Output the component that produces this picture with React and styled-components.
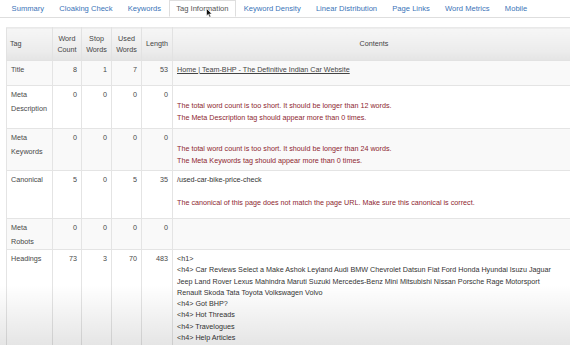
import React from 'react'
import styled, { createGlobalStyle } from 'styled-components'

const GlobalStyle = createGlobalStyle`
  html, body {
    margin: 0;
    padding: 0;
    background: #fff;
    overflow: hidden;
  }
  body {
    font-family: "Liberation Sans", Arial, sans-serif;
    color: #444;
  }
`

const Page = styled.div`
  position: relative;
  width: 570px;
  height: 345px;
  overflow: hidden;
`

const TabBar = styled.ul`
  display: flex;
  margin: 0;
  padding: 0 0 0 4px;
  list-style: none;
  height: 17px;
  border-bottom: 1px solid #dedede;
`

const Tab = styled.li`
  position: relative;
  padding: 0 6.6px;
  font-size: 7.6px;
  line-height: 15px;
  margin-bottom: -1px;
  color: ${(p) => (p.active ? '#555' : '#3b74b8')};
  background: ${(p) => (p.active ? '#fff' : 'transparent')};
  border: 1px solid ${(p) => (p.active ? '#dedede' : 'transparent')};
  border-bottom-color: ${(p) => (p.active ? '#fff' : 'transparent')};
  height: 17px;
  box-sizing: border-box;
  white-space: nowrap;
`

const Cursor = styled.svg`
  position: absolute;
  left: 36px;
  top: 7px;
  width: 7px;
  height: 10px;
`

const Table = styled.table`
  margin: 9px 0 0 6px;
  width: 570px;
  border-collapse: collapse;
  font-size: 7.2px;
`

const Head = styled.th`
  box-sizing: border-box;
  height: 33px;
  padding: 0 3px;
  font-weight: normal;
  color: #444;
  line-height: 11.5px;
  text-align: ${(p) => p.align || 'center'};
  width: ${(p) => (p.w ? p.w + 'px' : 'auto')};
  background: linear-gradient(#f6f6f6, #ececec 70%, #e4e4e4);
  border: 1px solid #e2e2e2;
  border-top-color: #e9e9e9;
`

const Row = styled.tr`
  height: ${(p) => p.h}px;
  background: ${(p) => (p.striped ? '#f9f9f9' : '#fff')};
`

const Cell = styled.td`
  box-sizing: border-box;
  vertical-align: top;
  padding: 2px 4px 0;
  border: 1px solid #e4e4e4;
  border-top-color: #dcdcdc;
  line-height: 14px;
  color: #484848;
  text-align: ${(p) => (p.num ? 'right' : 'left')};
`

const Contents = styled.td`
  vertical-align: top;
  padding: 3px 4px;
  border: 1px solid #e4e4e4;
  border-top-color: #dcdcdc;
  line-height: 11.3px;
  color: #333;
`

const Line = styled.div`
  min-height: 11.3px;
  color: ${(p) => (p.error ? '#8e1f30' : 'inherit')};
`

const Wrap = styled.div`
  width: 380px;
`

const Link = styled.a`
  color: #444;
  text-decoration: underline;
`

const Shade = styled.div`
  position: absolute;
  left: 0;
  right: 0;
  bottom: 0;
  height: 60px;
  pointer-events: none;
  background: linear-gradient(rgba(0, 0, 0, 0), rgba(0, 0, 0, 0.1));
`

const tabs = [
  'Summary',
  'Cloaking Check',
  'Keywords',
  'Tag Information',
  'Keyword Density',
  'Linear Distribution',
  'Page Links',
  'Word Metrics',
  'Mobile'
]

const rows = [
  {
    tag: ['Title'],
    nums: [8, 1, 7, 53],
    h: 25,
    content: [
      <Link key='l'>Home | Team-BHP - The Definitive Indian Car Website</Link>
    ]
  },
  {
    tag: ['Meta', 'Description'],
    nums: [0, 0, 0, 0],
    h: 43,
    content: [
      '',
      { err: 'The total word count is too short. It should be longer than 12 words.' },
      { err: 'The Meta Description tag should appear more than 0 times.' }
    ]
  },
  {
    tag: ['Meta', 'Keywords'],
    nums: [0, 0, 0, 0],
    h: 42,
    content: [
      '',
      { err: 'The total word count is too short. It should be longer than 24 words.' },
      { err: 'The Meta Keywords tag should appear more than 0 times.' }
    ]
  },
  {
    tag: ['Canonical'],
    nums: [5, 0, 5, 35],
    h: 48,
    content: [
      '/used-car-bike-price-check',
      '',
      { err: 'The canonical of this page does not match the page URL. Make sure this canonical is correct.' }
    ]
  },
  {
    tag: ['Meta', 'Robots'],
    nums: [0, 0, 0, 0],
    h: 30,
    content: []
  },
  {
    tag: ['Headings'],
    nums: [73, 3, 70, 483],
    h: 100,
    content: [
      '<h1>',
      '<h4> Car Reviews Select a Make Ashok Leyland Audi BMW Chevrolet Datsun Fiat Ford Honda Hyundai Isuzu Jaguar Jeep Land Rover Lexus Mahindra Maruti Suzuki Mercedes-Benz Mini Mitsubishi Nissan Porsche Rage Motorsport Renault Skoda Tata Toyota Volkswagen Volvo',
      '<h4> Got BHP?',
      '<h4> Hot Threads',
      '<h4> Travelogues',
      '<h4> Help Articles'
    ]
  }
]

export default function App() {
  return (
    <Page>
      <GlobalStyle />
      <TabBar>
        {tabs.map((t) => (
          <Tab key={t} active={t === 'Tag Information'}>
            {t}
            {t === 'Tag Information' && (
              <Cursor viewBox='0 0 7 10'>
                <path
                  d='M0.5 0.5 L0.5 8 L2.3 6.3 L3.6 9.3 L4.8 8.8 L3.6 5.9 L6 5.9 Z'
                  fill='#111'
                  stroke='#fff'
                  strokeWidth='0.6'
                />
              </Cursor>
            )}
          </Tab>
        ))}
      </TabBar>
      <Table>
        <thead>
          <tr>
            <Head align='left' w={46}>Tag</Head>
            <Head w={29}>Word<br />Count</Head>
            <Head w={30}>Stop<br />Words</Head>
            <Head w={30}>Used<br />Words</Head>
            <Head w={31}>Length</Head>
            <Head>Contents</Head>
          </tr>
        </thead>
        <tbody>
          {rows.map((r, i) => (
            <Row key={r.tag.join(' ')} h={r.h} striped={i % 2 === 0}>
              <Cell>
                {r.tag.map((t) => (
                  <div key={t}>{t}</div>
                ))}
              </Cell>
              {r.nums.map((n, j) => (
                <Cell key={j} num>
                  {n}
                </Cell>
              ))}
              <Contents>
                <Wrap>
                  {r.content.map((c, k) =>
                    c && c.err ? (
                      <Line key={k} error>
                        {c.err}
                      </Line>
                    ) : (
                      <Line key={k}>{c}</Line>
                    )
                  )}
                </Wrap>
              </Contents>
            </Row>
          ))}
        </tbody>
      </Table>
      <Shade />
    </Page>
  )
}
